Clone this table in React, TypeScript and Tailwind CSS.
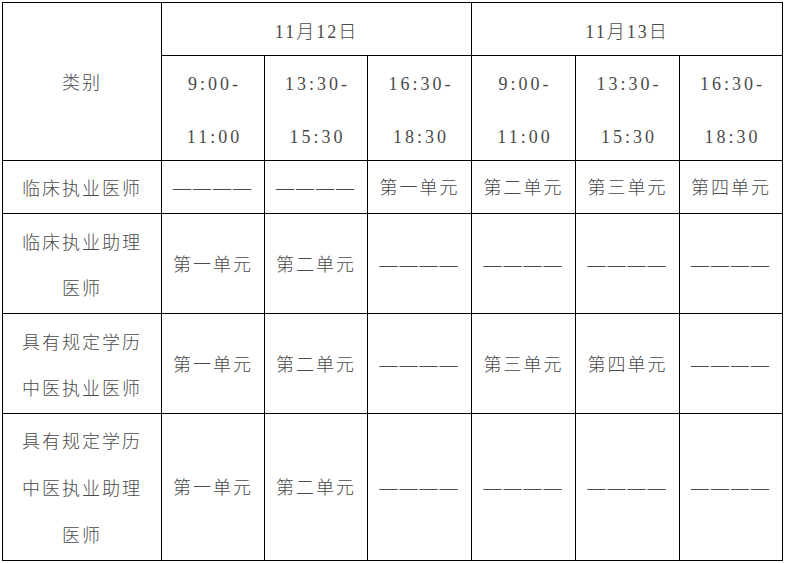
import React from "react";

const font = { fontFamily: '"Liberation Serif", "Noto Sans CJK SC", serif' };

function Cell({
  children,
  className = "",
}: {
  children?: React.ReactNode;
  className?: string;
}) {
  return (
    <div
      className={
        "bg-white flex items-center justify-center text-center text-[18px] tracking-[2px] text-[#4a4a4a] font-light " +
        className
      }
    >
      {children}
    </div>
  );
}

const DASH = "————";

function Lines({ lines, lh }: { lines: string[]; lh: string }) {
  return (
    <div className={"pt-[4px] " + lh}>
      {lines.map((l, i) => (
        <div key={i}>{l}</div>
      ))}
    </div>
  );
}

export default function App() {
  const rows: { label: string[]; cells: string[] }[] = [
    {
      label: ["临床执业医师"],
      cells: [DASH, DASH, "第一单元", "第二单元", "第三单元", "第四单元"],
    },
    {
      label: ["临床执业助理", "医师"],
      cells: ["第一单元", "第二单元", DASH, DASH, DASH, DASH],
    },
    {
      label: ["具有规定学历", "中医执业医师"],
      cells: ["第一单元", "第二单元", DASH, "第三单元", "第四单元", DASH],
    },
    {
      label: ["具有规定学历", "中医执业助理", "医师"],
      cells: ["第一单元", "第二单元", DASH, DASH, DASH, DASH],
    },
  ];
  const times = [
    ["9:00-", "11:00"],
    ["13:30-", "15:30"],
    ["16:30-", "18:30"],
    ["9:00-", "11:00"],
    ["13:30-", "15:30"],
    ["16:30-", "18:30"],
  ];
  return (
    <div className="w-[786px] h-[563px] bg-white pt-[2px] pl-[2px]" style={font}>
      <div className="grid w-[781px] bg-black p-px gap-px grid-cols-[158px_102px_102px_103px_103px_103px_102px] grid-rows-[52px_104px_52px_99px_99px_146px]">
        <Cell className="row-span-2">
          <div className="pt-[3px]">类别</div>
        </Cell>
        <Cell className="col-span-3">
          <div className="pt-[6px] tracking-[2px]">11月12日</div>
        </Cell>
        <Cell className="col-span-3">
          <div className="pt-[6px] tracking-[2px]">11月13日</div>
        </Cell>
        {times.map((t, i) => (
          <Cell key={i}>
            <div className="leading-[53px] pt-[5px] tracking-[3px] pl-[3px]">
              <div>{t[0]}</div>
              <div>{t[1]}</div>
            </div>
          </Cell>
        ))}
        {rows.map((r, ri) => (
          <React.Fragment key={ri}>
            <Cell>
              <Lines lines={r.label} lh={ri === 3 ? "leading-[47px]" : "leading-[46px]"} />
            </Cell>
            {r.cells.map((c, ci) => (
              <Cell key={ci}>
                <div className="pt-[3px]">{c}</div>
              </Cell>
            ))}
          </React.Fragment>
        ))}
      </div>
    </div>
  );
}
